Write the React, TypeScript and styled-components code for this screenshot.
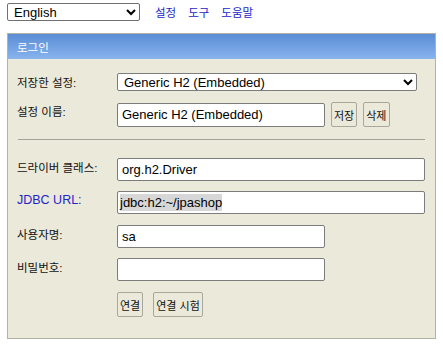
import styled, { createGlobalStyle } from "styled-components"

const GlobalStyle = createGlobalStyle`
  body {
    margin: 0;
    background: #ffffff;
    font-family: "Liberation Sans", "Noto Sans CJK KR", sans-serif;
    font-size: 13px;
    color: #000;
  }
`

const Page = styled.div`
  padding: 3px 7px 0 7px;
  width: 429px;
`

const TopBar = styled.div`
  display: flex;
  align-items: center;
  gap: 12px;
  height: 18px;
`

const LangSelect = styled.select`
  width: 133px;
  height: 18px;
  font-family: inherit;
  font-size: 13px;
  border: 1px solid #707070;
  border-radius: 2px;
  background: #fff;
  padding: 0 2px;
  margin-right: 3px;
`

const NavLink = styled.a`
  color: #2424c8;
  text-decoration: none;
  font-size: 11.5px;
`

const Panel = styled.div`
  margin-top: 12px;
  border: 1px solid #b4b2a4;
  background: #ebe9d9;
`

const PanelHeader = styled.div`
  height: 25px;
  display: flex;
  align-items: center;
  padding-left: 9px;
  color: #fff;
  font-size: 11.5px;
  background: linear-gradient(#5b8dd5, #88b4ee);
`

const Body = styled.div`
  padding: 14px 9px 21px 9px;
`

const Row = styled.div<{ $gap?: number }>`
  display: grid;
  grid-template-columns: 100px 1fr;
  align-items: start;
  margin-bottom: ${(p) => p.$gap ?? 10}px;
`

const Label = styled.label<{ $link?: boolean }>`
  padding-top: ${(p) => (p.$link ? 2 : 1)}px;
  font-size: ${(p) => (p.$link ? 12.5 : 11.5)}px;
  color: ${(p) => (p.$link ? "#2424c8" : "#111")};
`

const Controls = styled.div<{ $gap?: number }>`
  display: flex;
  gap: ${(p) => p.$gap ?? 6}px;
  align-items: center;
`

const boxBase = `
  box-sizing: border-box;
  border: 1px solid #7c7c7c;
  border-radius: 2px;
  background: #fff;
  font-size: 13px;
  color: #000;
`

const Field = styled.input<{ $w: number; $h?: number }>`
  ${boxBase}
  width: ${(p) => p.$w}px;
  height: ${(p) => p.$h ?? 23}px;
  font-family: inherit;
  padding: 0 4px;
  outline: none;
`

const UrlField = styled.div<{ $w: number }>`
  ${boxBase}
  width: ${(p) => p.$w}px;
  height: 23px;
  padding: 0 2px;
  display: flex;
  align-items: center;
`

const Selected = styled.span`
  background: #d7d7d7;
  padding: 1px 0;
`

const Picker = styled.select`
  ${boxBase}
  width: 300px;
  height: 18px;
  font-family: inherit;
  padding: 0 2px;
`

const Btn = styled.button`
  height: 25px;
  box-sizing: border-box;
  padding: 0 2px;
  border: 1px solid #a9a79a;
  border-radius: 2px;
  background: #ebe9d9;
  font-family: inherit;
  font-size: 11px;
  color: #111;
`

const Rule = styled.hr`
  border: 0;
  border-top: 1px solid #a5a397;
  margin: 6px 1px 18px 1px;
`

export default function App() {
  return (
    <>
      <GlobalStyle />
      <Page>
        <TopBar>
          <LangSelect defaultValue="en">
            <option value="en">English</option>
          </LangSelect>
          <NavLink href="#">설정</NavLink>
          <NavLink href="#">도구</NavLink>
          <NavLink href="#">도움말</NavLink>
        </TopBar>
        <Panel>
          <PanelHeader>로그인</PanelHeader>
          <Body>
            <Row $gap={11}>
              <Label>저장한 설정:</Label>
              <Picker defaultValue="g">
                <option value="g">Generic H2 (Embedded)</option>
              </Picker>
            </Row>
            <Row $gap={12}>
              <Label>설정 이름:</Label>
              <Controls>
                <Field $w={208} $h={24} defaultValue="Generic H2 (Embedded)" />
                <Btn>저장</Btn>
                <Btn>삭제</Btn>
              </Controls>
            </Row>
            <Rule />
            <Row>
              <Label>드라이버 클래스:</Label>
              <Field $w={308} defaultValue="org.h2.Driver" />
            </Row>
            <Row $gap={11}>
              <Label $link>JDBC URL:</Label>
              <UrlField $w={308}>
                <Selected>jdbc:h2:~/jpashop</Selected>
              </UrlField>
            </Row>
            <Row>
              <Label>사용자명:</Label>
              <Field $w={208} defaultValue="sa" />
            </Row>
            <Row $gap={11}>
              <Label>비밀번호:</Label>
              <Field $w={208} type="password" defaultValue="" />
            </Row>
            <Row $gap={0}>
              <span />
              <Controls $gap={10}>
                <Btn>연결</Btn>
                <Btn>연결 시험</Btn>
              </Controls>
            </Row>
          </Body>
        </Panel>
      </Page>
    </>
  )
}
